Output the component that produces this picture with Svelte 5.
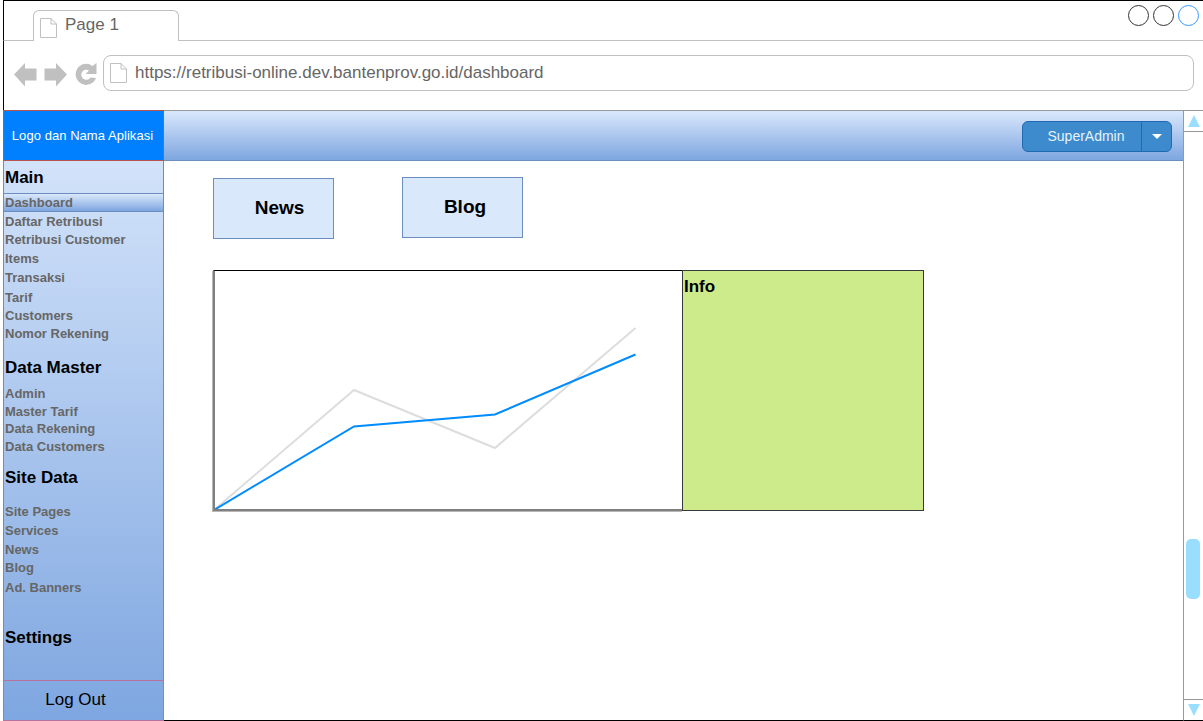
<script>
	const groups = [
		{
			title: 'Main',
			h: 25,
			items: [
				{ label: 'Dashboard', h: 19, active: true },
				{ label: 'Daftar Retribusi', h: 18 },
				{ label: 'Retribusi Customer', h: 19 },
				{ label: 'Items', h: 19 },
				{ label: 'Transaksi', h: 20 },
				{ label: 'Tarif', h: 18 },
				{ label: 'Customers', h: 18 },
				{ label: 'Nomor Rekening', h: 34 }
			]
		},
		{
			title: 'Data Master',
			h: 26,
			items: [
				{ label: 'Admin', h: 18 },
				{ label: 'Master Tarif', h: 17 },
				{ label: 'Data Rekening', h: 18 },
				{ label: 'Data Customers', h: 31 }
			]
		},
		{
			title: 'Site Data',
			h: 34,
			items: [
				{ label: 'Site Pages', h: 19 },
				{ label: 'Services', h: 19 },
				{ label: 'News', h: 18 },
				{ label: 'Blog', h: 20 },
				{ label: 'Ad. Banners', h: 50 }
			]
		},
		{ title: 'Settings', h: 25, items: [] }
	];
</script>

{#snippet pageIcon()}
	<svg class="page-icon" width="17" height="20" viewBox="0 0 17 20">
		<path d="M0.5 0.5H11L16.5 6V19.5H0.5Z M11 0.5V6H16.5" fill="none" stroke="#c0c0c0" />
	</svg>
{/snippet}

<div class="window">
	<div class="tabbar">
		<div class="tab">
			{@render pageIcon()}
			<span>Page 1</span>
		</div>
		<div class="controls">
			<i></i>
			<i></i>
			<i class="max"></i>
		</div>
	</div>

	<div class="addressbar">
		<svg class="nav" width="84" height="26" viewBox="0 0 84 26">
			<path d="M0 12.500L11 1V6.500H22.500V18.500H11V24.500Z" fill="#c0c0c0" />
			<path d="M53 12.500L42 1V6.500H30.500V18.500H42V24.500Z" fill="#c0c0c0" />
			<path d="M82 16A10.500 10.500 0 1 1 78.500 4L82.500 1V12H71.500L75 8.500A5 5 0 1 0 76.500 15.500Z" fill="#c0c0c0" />
		</svg>
		<div class="url">
			{@render pageIcon()}
			<span>https://retribusi-online.dev.bantenprov.go.id/dashboard</span>
		</div>
	</div>

	<div class="app">
		<aside class="sidebar">
			<div class="logo">Logo dan Nama Aplikasi</div>
			<nav>
				{#each groups as group}
					<h3 style="height: {group.h}px">{group.title}</h3>
					{#each group.items as item}
						<div class="item" class:active={item.active} style="height: {item.h}px">{item.label}</div>
					{/each}
				{/each}
			</nav>
			<div class="logout">Log Out</div>
		</aside>

		<div class="center">
			<header>
				<div class="user">
					<span class="name">SuperAdmin</span>
					<span class="caret"></span>
				</div>
			</header>
			<main>
				<div class="cards">
					<div class="card news">News</div>
					<div class="card blog">Blog</div>
				</div>
				<div class="panels">
					<div class="chart">
						<svg width="469" height="238" viewBox="0 0 469 238">
							<polyline points="0,239 140,119 281,177 421.500,57" fill="none" stroke="#dddddd" stroke-width="2" />
							<polyline points="0,239 140,155.500 281,143.500 421.500,83.500" fill="none" stroke="#008cff" stroke-width="2" />
						</svg>
					</div>
					<div class="info">Info</div>
				</div>
			</main>
		</div>

		<div class="scrollbar">
			<div class="arrow up"><b></b></div>
			<div class="track"><div class="thumb"></div></div>
			<div class="arrow down"><b></b></div>
		</div>
	</div>
</div>

<style>
	:global(body) {
		margin: 0;
		overflow: hidden;
		background: #fff;
	}

	.window {
		box-sizing: border-box;
		width: 1200px;
		height: 721px;
		margin-left: 3px;
		display: flex;
		flex-direction: column;
		border-top: 1px solid #000;
		font-family: 'Liberation Sans', Arial, sans-serif;
	}

	.tabbar {
		box-sizing: border-box;
		height: 40px;
		flex: none;
		display: flex;
		justify-content: space-between;
		padding-left: 29px;
		border-left: 1px solid #000;
		border-bottom: 1px solid #c0c0c0;
	}

	.tab {
		box-sizing: border-box;
		width: 146px;
		height: 31px;
		margin-top: 9px;
		display: flex;
		align-items: center;
		gap: 8px;
		padding: 0 0 0 6px;
		background: #fff;
		border: 1px solid #c0c0c0;
		border-bottom: none;
		border-radius: 6px 6px 0 0;
		font-size: 17px;
		color: #666;
	}

	.tab .page-icon {
		margin-top: 3px;
	}

	.tab span {
		margin-bottom: 2px;
	}

	.controls {
		display: flex;
		gap: 4px;
		padding: 4px 4px 0 0;
	}

	.controls i {
		box-sizing: border-box;
		width: 21px;
		height: 21px;
		border: 1px solid #333;
		border-radius: 50%;
	}

	.controls i.max {
		border-color: #3399ff;
	}

	.addressbar {
		box-sizing: border-box;
		height: 69px;
		flex: none;
		display: flex;
		align-items: flex-start;
		padding: 14px 9px 0 10px;
		gap: 5px;
		border-left: 1px solid #000;
	}

	.nav {
		margin-top: 7px;
		flex: none;
	}

	.url {
		box-sizing: border-box;
		flex: 1;
		height: 36px;
		display: flex;
		align-items: center;
		gap: 8px;
		padding-left: 6px;
		border: 1px solid #c0c0c0;
		border-radius: 8px;
		font-size: 17px;
		color: #666;
	}

	.page-icon {
		flex: none;
	}

	.app {
		flex: 1;
		min-height: 0;
		display: flex;
	}

	.sidebar {
		box-sizing: border-box;
		width: 161px;
		flex: none;
		display: flex;
		flex-direction: column;
		background: linear-gradient(#dae8fc, #7ea6e0);
		border-left: 1px solid #6c8ebf;
		border-right: 1px solid #6c8ebf;
		margin-right: -1px;
		position: relative;
	}

	.logo {
		box-sizing: border-box;
		height: 51px;
		flex: none;
		margin: 0 -1px;
		padding-right: 2px;
		display: flex;
		align-items: center;
		justify-content: center;
		background: #007fff;
		border: 1px solid #b85450;
		color: #fff;
		font-size: 13px;
		letter-spacing: 0.05px;
	}

	nav {
		flex: 1;
		padding-top: 7px;
	}

	h3 {
		margin: 0;
		padding-left: 1px;
		font-size: 17px;
		line-height: 19px;
		font-weight: 700;
		color: #000;
	}

	.item {
		box-sizing: border-box;
		padding-left: 1px;
		font-size: 13px;
		line-height: 19px;
		font-weight: 700;
		color: #666;
	}

	.item.active {
		line-height: 17px;
		background: linear-gradient(#dae8fc, #7ea6e0);
		border-top: 1px solid #6c8ebf;
		border-bottom: 1px solid #6c8ebf;
	}

	.logout {
		box-sizing: border-box;
		height: 41px;
		flex: none;
		margin: 0 -1px;
		padding: 0 16px 2px 0;
		display: flex;
		align-items: center;
		justify-content: center;
		border: 1px solid #b5739d;
		font-size: 17px;
		color: #000;
	}

	.center {
		flex: 1;
		min-width: 0;
		display: flex;
		flex-direction: column;
	}

	header {
		box-sizing: border-box;
		height: 51px;
		flex: none;
		display: flex;
		justify-content: flex-end;
		padding: 10px 11px 0 0;
		background: linear-gradient(#dae8fc, #7ea6e0);
		border-top: 1px solid #999;
		border-bottom: 1px solid #6c8ebf;
	}

	.user {
		box-sizing: border-box;
		width: 150px;
		height: 31px;
		display: flex;
		background: #3d8bcd;
		border: 1px solid #1f6ab0;
		border-radius: 6px;
		color: #e6f2fb;
		font-size: 14px;
	}

	.name {
		box-sizing: border-box;
		width: 119px;
		padding: 0 0 2px 8px;
		display: flex;
		align-items: center;
		justify-content: center;
		border-right: 1px solid #1f6ab0;
	}

	.caret {
		flex: 1;
		position: relative;
	}

	.caret::after {
		content: '';
		position: absolute;
		left: 10px;
		top: 12px;
		border-left: 5px solid transparent;
		border-right: 5px solid transparent;
		border-top: 5px solid #fff;
	}

	main {
		flex: 1;
		border-bottom: 1px solid #000;
		padding: 16px 0 0 50px;
	}

	.cards {
		display: flex;
		align-items: flex-start;
		gap: 68px;
	}

	.card {
		box-sizing: border-box;
		width: 121px;
		height: 61px;
		display: flex;
		align-items: center;
		justify-content: center;
		background: #dae8fc;
		border: 1px solid #6c8ebf;
		font-size: 19px;
		font-weight: 700;
		color: #000;
	}

	.news {
		margin-top: 1px;
		padding: 0 0 2px 12px;
	}

	.blog {
		padding: 0 0 2px 5px;
	}

	.panels {
		display: flex;
		margin-top: 31px;
	}

	.chart {
		box-sizing: border-box;
		width: 470px;
		height: 241px;
		border-top: 1px solid #000;
		border-left: 2px solid #808080;
		border-bottom: 2px solid #808080;
		box-shadow: -1px 1px 0 #b8b8b8;
		overflow: hidden;
	}

	.chart svg {
		display: block;
		margin-left: -1px;
	}

	.info {
		box-sizing: border-box;
		width: 242px;
		height: 241px;
		margin-left: -1px;
		padding: 6px 0 0 1px;
		background: #cdeb8b;
		border: 1px solid #36393d;
		position: relative;
		font-size: 17px;
		line-height: 20px;
		font-weight: 700;
		color: #000;
	}

	.scrollbar {
		box-sizing: border-box;
		width: 20px;
		flex: none;
		display: flex;
		flex-direction: column;
		border-top: 1px solid #999;
		border-left: 1px solid #999;
		border-bottom: 1px solid #000;
	}

	.arrow {
		height: 20px;
		flex: none;
		display: flex;
		justify-content: center;
		align-items: center;
	}

	.arrow.up {
		border-bottom: 1px solid #999;
	}

	.arrow.down {
		border-top: 1px solid #999;
	}

	.arrow b {
		border-left: 6px solid transparent;
		border-right: 6px solid transparent;
	}

	.up b {
		border-bottom: 12px solid #99ddff;
	}

	.down b {
		border-top: 12px solid #99ddff;
	}

	.track {
		flex: 1;
		padding: 407px 3px 0 2px;
	}

	.thumb {
		height: 60px;
		background: #99ddff;
		border-radius: 5px;
	}
</style>
